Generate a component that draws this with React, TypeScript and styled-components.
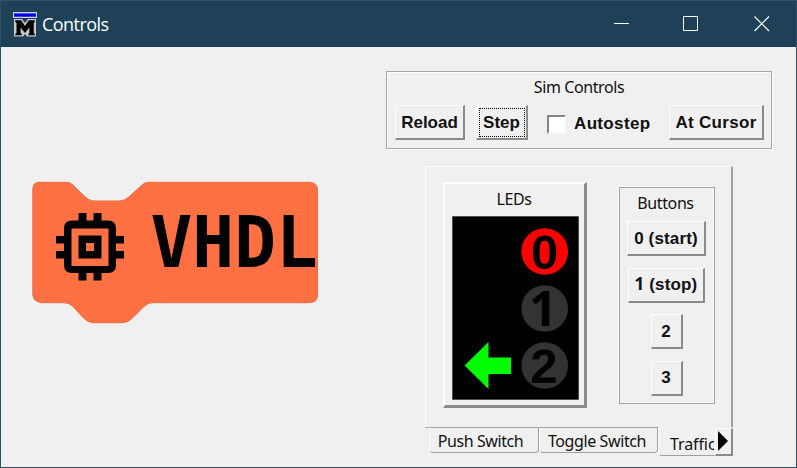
import React from "react";
import styled, { createGlobalStyle, css } from "styled-components";

const Global = createGlobalStyle`
  * { box-sizing: border-box; }
  body { margin: 0; background: #f0f0f0; overflow: hidden; }
`;

const Window = styled.div`
  width: 797px;
  height: 468px;
  display: flex;
  flex-direction: column;
  background: #f0f0f0;
  border: 1px solid #2b5167;
  border-top-width: 0;
  color: #111;
`;

const TitleBar = styled.header`
  height: 47px;
  flex: none;
  display: flex;
  align-items: center;
  background: #1e4157;
  border-top: 1px solid #335468;
  padding-left: 12px;
`;

const Title = styled.h1`
  flex: 1;
  margin: 0 0 0 5px;
  font: 400 18px/24px "Open Sans", sans-serif;
  letter-spacing: -0.55px;
  color: #fff;
`;

const WindowControls = styled.div`
  display: flex;
  margin-right: 26px;
  gap: 53px;

  svg:last-child { margin-left: 2px; }
`;

const Body = styled.main`
  display: grid;
  grid-template-columns: 385px 386px;
  height: 420px;
`;

const Block = styled.svg`
  margin: 133px 0 0 30px;
`;

const Side = styled.div`
  padding-top: 24px;
`;

const Caption = styled.div<{ $spacing?: number; $shift?: number }>`
  font: 400 16px/20px "Noto Sans", sans-serif;
  letter-spacing: ${(p) => p.$spacing ?? -0.4}px;
  padding-right: ${(p) => p.$shift ?? 0}px;
  text-align: center;
  white-space: nowrap;
`;

const SimFrame = styled.section`
  height: 78px;
  border: 1px solid #a5a5a5;
  box-shadow: inset 1px 1px #fff, 1px 1px #fff;
  padding: 5px 0 0 8px;
`;

const SimRow = styled.div`
  display: flex;
  align-items: flex-start;
  margin-top: 8px;
`;

const raised = css`
  border: solid;
  border-width: 1px 2px 2px 1px;
  border-color: #fff #8a8a8a #8a8a8a #fff;
`;

const PushButton = styled.button<{ $w: number; $gap?: number; $spacing?: number; $focus?: boolean }>`
  ${raised}
  width: ${(p) => p.$w}px;
  height: 35px;
  margin: 0 0 0 ${(p) => p.$gap ?? 0}px;
  padding: 0;
  background: #f0f0f0;
  color: #111;
  font: 700 17px/31px "Liberation Sans", sans-serif;
  letter-spacing: ${(p) => p.$spacing ?? 0}px;
  white-space: nowrap;
  ${(p) =>
    p.$focus &&
    css`
      outline: 1px dotted #000;
      outline-offset: -4px;
    `}
`;

const PlainOne = styled.span`
  font-family: "Open Sans", sans-serif;
  line-height: 1;
`;

const CheckLabel = styled.label`
  display: flex;
  align-items: center;
  gap: 8px;
  width: 122px;
  height: 35px;
  margin-left: 19px;
  padding-top: 3px;
  font: 700 17px/20px "Liberation Sans", sans-serif;
  letter-spacing: 0.35px;
  white-space: nowrap;
`;

const CheckBox = styled.span`
  width: 19px;
  height: 19px;
  flex: none;
  background: #fff;
  border: 2px solid;
  border-color: #858585 #f8f8f8 #f8f8f8 #858585;
`;

const Notebook = styled.section`
  width: 308px;
  margin: 17px 0 0 39px;
`;

const Page = styled.div`
  height: 261px;
  display: flex;
  align-items: flex-start;
  border: solid;
  border-width: 1px 2px 0 1px;
  border-color: #fff #a0a0a0 transparent #fff;
  padding: 15px 0 0 17px;
`;

const LedPanel = styled.div`
  width: 144px;
  height: 226px;
  border: solid;
  border-width: 2px 3px 3px 2px;
  border-color: #fff #8a8a8a #8a8a8a #fff;
  padding: 5px 0 0 7px;

  ${Caption} { width: 125px; margin-bottom: 7px; }
`;

const ButtonPanel = styled.div`
  width: 97px;
  height: 218px;
  margin: 4px 0 0 31px;
  border: 1px solid;
  border-color: #fff #a0a0a0 #a0a0a0 #fff;
  box-shadow: inset 1px 1px #a0a0a0, inset -1px -1px #fff;
  padding: 6px 4px 0 8px;
`;

const ButtonStack = styled.div`
  display: flex;
  flex-direction: column;
  align-items: center;
  gap: 11.5px;
  width: 79px;
  margin-top: 8px;
`;

const TabStrip = styled.nav`
  display: flex;
  align-items: flex-start;
`;

const Tab = styled.div<{ $w: number; $active?: boolean }>`
  width: ${(p) => p.$w}px;
  height: ${(p) => (p.$active ? 29 : 26)}px;
  padding: ${(p) => (p.$active ? "6px 0 0 11px" : "3px 0 0")};
  border: solid;
  border-width: 1px;
  border-color: ${(p) => (p.$active ? "transparent" : "#a0a0a0")} ${(p) => (p.$active ? "transparent" : "#a0a0a0")} #a0a0a0 #fff;
  border-bottom-left-radius: 4px;
  border-bottom-right-radius: ${(p) => (p.$active ? 0 : 4)}px;
  overflow: hidden;
  ${Caption} { text-align: ${(p) => (p.$active ? "left" : "center")}; }
`;

const TabLead = styled.span`
  width: 4px;
  border-top: 1px solid #a0a0a0;
`;

const ScrollButton = styled.button`
  ${raised}
  width: 18px;
  height: 28px;
  margin: 1px 0 0;
  padding: 0;
  background: #f0f0f0;
  display: flex;
  align-items: flex-start;
`;

function AppLogo() {
  return (
    <svg width="24" height="25" viewBox="0 0 24 25">
      <rect width="24" height="6" fill="#c9d2d8" />
      <rect x="1" y="1.4" width="22" height="3.3" fill="#0000f0" />
      <path d="M1 7H9L12 11L15 7H23V24.5H14L12 22L10 24.5H1Z" fill="#c5c8c9" />
      <path d="M2.3 8.3H8.2L12 14L15.8 8.3H21.8V10L20.7 11V21L21.8 22V23.3H15.3V22L16.4 21V15.5L12 21L7.6 15.5V21L8.7 22V23.3H2.3V22L3.5 21V11L2.3 10Z" fill="#000" />
    </svg>
  );
}

function VhdlBlock() {
  return (
    <Block width="290" height="145" viewBox="31 180 290 145">
      <path
        d="M39 182.300H67Q70 182.300 73 185L84 196Q89 201 94 201H120Q125 201 130 196L142 185Q145 182.300 148 182.300H309Q317.500 182.300 317.500 190V295Q317.500 302.700 309 302.700H152Q148 302.700 144 306.500L133 317.500Q128 322.700 123 322.700H93Q88 322.700 83 317.500L73 306.500Q69 302.700 64 302.700H42Q38 302.700 35 300Q32.800 298 32.800 294V189Q33 182.300 39 182.300Z"
        fill="#ff7043"
        stroke="#ef6c45"
        strokeWidth="1"
      />
      <path d="M78.500 213h8v7.500h7v-7.500h8v7.500h6.500q8 0 8 8v7.500h8v7.500h-8v7.500h8v7.500h-8v6.500q0 8-8 8h-6.500v7.500h-8v-7.500h-7v7.500h-8v-7.500H72q-8 0-8-8V258.500h-8v-7.500h8v-7.500h-8V236h8v-7.500q0-8 8-8h6.500ZM71.500 228.500V266H108.500V228.500Z" fill="#000" fillRule="evenodd" />
      <path d="M78.500 235.500h23V258.500h-23ZM86 243v8h8v-8Z" fill="#000" fillRule="evenodd" />
      <text x="150.500" y="267" fontFamily="DejaVu Sans Mono" fontWeight="700" fontSize="71" textLength="167.500" lengthAdjust="spacingAndGlyphs">VHDL</text>
    </Block>
  );
}

const lamps = [
  { label: "0", x: 544.7, y: 251.5, color: "#ff0000", font: "Liberation Sans" },
  { label: "1", x: 543, y: 308.5, color: "#333333", font: "Open Sans" },
  { label: "2", x: 544, y: 365.5, color: "#333333", font: "Liberation Sans" },
];

function Lights() {
  return (
    <svg width="127" height="184" viewBox="452 216 127 184" style={{ display: "block" }}>
      <rect x="452" y="216" width="127" height="184" fill="#999" />
      <rect x="452.500" y="216.500" width="126" height="183" fill="#000" />
      {lamps.map((l) => (
        <g key={l.label}>
          <circle cx="544.700" cy={l.y} r="23.300" fill={l.color} />
          <text x={l.x} y={l.y + 17.5} textAnchor="middle" fontFamily={l.font} fontWeight="700" fontSize="49" fill="#000">
            {l.label}
          </text>
        </g>
      ))}
      <path d="M464.500 365.500L488.500 342V357.500H511V374H488.500V389Z" fill="#0f0" />
    </svg>
  );
}

export default function App() {
  return (
    <Window>
      <Global />
      <TitleBar>
        <AppLogo />
        <Title>Controls</Title>
        <WindowControls>
          <svg width="16" height="16"><path d="M0 7.500H15" stroke="#fff" /></svg>
          <svg width="16" height="16"><path d="M.5 .5H14.500V14.500H.5Z" stroke="#fff" fill="none" /></svg>
          <svg width="16" height="16"><path d="M.5 .5L15 15M15 .5L.5 15" stroke="#fff" strokeWidth="1.200" /></svg>
        </WindowControls>
      </TitleBar>
      <Body>
        <VhdlBlock />
        <Side>
          <SimFrame>
            <Caption $shift={8}>Sim Controls</Caption>
            <SimRow>
              <PushButton $w={70}>Reload</PushButton>
              <PushButton $w={52} $gap={11} $focus>Step</PushButton>
              <CheckLabel><CheckBox />Autostep</CheckLabel>
              <PushButton $w={95} $spacing={0.3}>At Cursor</PushButton>
            </SimRow>
          </SimFrame>
          <Notebook>
            <Page>
              <LedPanel>
                <Caption $shift={1}>LEDs</Caption>
                <Lights />
              </LedPanel>
              <ButtonPanel>
                <Caption $shift={6}>Buttons</Caption>
                <ButtonStack>
                  <PushButton $w={79} $spacing={0.15}>0 (start)</PushButton>
                  <PushButton $w={77} $spacing={0.15}><PlainOne>1</PlainOne> (stop)</PushButton>
                  <PushButton $w={32}>2</PushButton>
                  <PushButton $w={32}>3</PushButton>
                </ButtonStack>
              </ButtonPanel>
            </Page>
            <TabStrip>
              <TabLead />
              <Tab $w={110}><Caption $shift={7}>Push Switch</Caption></Tab>
              <Tab $w={119}><Caption $shift={3}>Toggle Switch</Caption></Tab>
              <Tab $w={57} $active><Caption $spacing={-0.1}>Traffic</Caption></Tab>
              <ScrollButton>
                <svg width="13" height="24"><path d="M2 2L12 12L2 22Z" fill="#000" /></svg>
              </ScrollButton>
            </TabStrip>
          </Notebook>
        </Side>
      </Body>
    </Window>
  );
}
